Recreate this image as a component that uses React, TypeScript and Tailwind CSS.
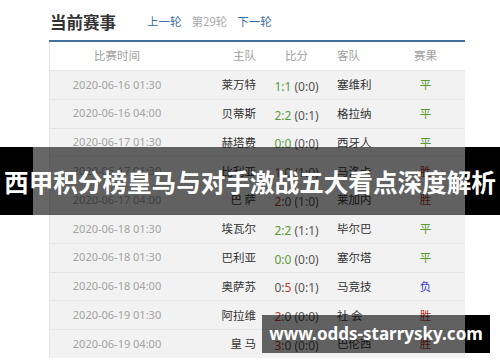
import React from "react";

type Row = {
  date: string;
  home: string;
  h: string;
  a: string;
  half: string;
  away: string;
  res: "平" | "胜" | "负";
};

const rows: Row[] = [
  { date: "2020-06-16 01:30", home: "莱万特", h: "1", a: "1", half: "(0:0)", away: "塞维利", res: "平" },
  { date: "2020-06-16 04:00", home: "贝蒂斯", h: "2", a: "2", half: "(0:1)", away: "格拉纳", res: "平" },
  { date: "2020-06-17 01:30", home: "赫塔费", h: "0", a: "0", half: "(0:0)", away: "西牙人", res: "平" },
  { date: "2020-06-17 01:30", home: "比利亚", h: "1", a: "0", half: "(1:0)", away: "马洛卡", res: "胜" },
  { date: "2020-06-17 04:00", home: "巴 萨", h: "2", a: "0", half: "(1:0)", away: "莱加内", res: "胜" },
  { date: "2020-06-18 01:30", home: "埃瓦尔", h: "2", a: "2", half: "(1:1)", away: "毕尔巴", res: "平" },
  { date: "2020-06-18 01:30", home: "巴利亚", h: "0", a: "0", half: "(0:0)", away: "塞尔塔", res: "平" },
  { date: "2020-06-18 04:00", home: "奥萨苏", h: "0", a: "5", half: "(0:1)", away: "马竞技", res: "负" },
  { date: "2020-06-19 01:30", home: "阿拉维", h: "2", a: "0", half: "(0:0)", away: "社 会", res: "胜" },
  { date: "2020-06-19 04:00", home: "皇 马", h: "3", a: "0", half: "(0:0)", away: "巴伦西", res: "胜" },
];

const cjk = { fontFamily: '"Noto Sans CJK SC", "Noto Sans", sans-serif' };
const latin = { fontFamily: '"Noto Sans", "Noto Sans CJK SC", sans-serif' };

function Score({ r }: { r: Row }) {
  const draw = r.h === r.a;
  const homeWin = Number(r.h) > Number(r.a);
  const hc = draw ? "text-[#5b9a3c]" : homeWin ? "text-[#c0392b]" : "text-[#555]";
  const ac = draw ? "text-[#5b9a3c]" : !homeWin ? "text-[#c0392b]" : "text-[#555]";
  const cc = draw ? "text-[#5b9a3c]" : "text-[#555]";
  return (
    <span className="text-[12px] whitespace-pre" style={latin}>
      <span className={hc}>{r.h}</span>
      <span className={cc}>:</span>
      <span className={ac}>{r.a}</span>
      <span className="text-[#555]"> {r.half}</span>
    </span>
  );
}

function resColor(res: string) {
  if (res === "平") return "text-[#5b9a3c]";
  if (res === "胜") return "text-[#a8322b]";
  return "text-[#3b3bc4]";
}

export default function App() {
  return (
    <div className="relative w-[500px] h-[362px] bg-white overflow-hidden">
      <div className="ml-[49px] w-[416px]">
        <div className="h-[40px] flex items-center pt-[4px]">
          <span className="text-[16.5px] font-bold text-[#333] mr-[31px] ml-[1px]" style={cjk}>
            当前赛事
          </span>
          <span className="text-[11.5px] text-[#3a6ea8] mr-[10px]" style={cjk}>上一轮</span>
          <span className="text-[11.5px] text-[#aaa] mr-[10px]" style={cjk}>第29轮</span>
          <span className="text-[11.5px] text-[#3a6ea8]" style={cjk}>下一轮</span>
        </div>
        <div className="h-[2px] bg-[#43719f]" />
        <div className="border-l border-[#e3e3e3]">
          <div className="grid grid-cols-[134px_82px_61px_58px_81px] h-[28px] items-center text-[11.5px] text-[#a0a0a0] bg-white" style={cjk}>
            <div className="text-center">比赛时间</div>
            <div className="text-right pr-[10px]">主队</div>
            <div className="text-center">比分</div>
            <div className="pl-[10px]">客队</div>
            <div className="text-center">赛果</div>
          </div>
          {rows.map((r, i) => (
            <div
              key={i}
              className="grid grid-cols-[134px_82px_61px_58px_81px] h-[28.8px] items-center bg-[#f2f2f2] border-t border-[#e6e6e6]"
            >
              <div className="text-center text-[11px] text-[#a3a3a3]" style={latin}>{r.date}</div>
              <div className="text-right pr-[10px] text-[11.5px] text-[#333] whitespace-pre" style={cjk}>{r.home}</div>
              <div className="text-center"><Score r={r} /></div>
              <div className="pl-[10px] text-[11.5px] text-[#333] whitespace-pre" style={cjk}>{r.away}</div>
              <div className={`text-center text-[11.5px] ${resColor(r.res)}`} style={cjk}>{r.res}</div>
            </div>
          ))}
        </div>
      </div>

      {/* Title banner overlay */}
      <div className="absolute left-0 top-[147px] w-[500px] h-[68px] flex">
        <div className="w-[33px] h-full bg-black" />
        <div className="w-[432px] h-full bg-black/60" />
        <div className="flex-1 h-full bg-black" />
        <div className="absolute inset-0 flex items-center justify-center">
          <span className="text-white font-bold text-[24.6px] whitespace-nowrap tracking-[0px]" style={cjk}>
            西甲积分榜皇马与对手激战五大看点深度解析
          </span>
        </div>
      </div>

      {/* Watermark */}
      <div className="absolute left-[262px] top-[315px] w-[228px] h-[38px] flex">
        <div className="w-[203px] h-full bg-black/60" />
        <div className="flex-1 h-full bg-black" />
        <div className="absolute inset-0 flex items-center justify-center">
          <span className="text-white font-bold text-[17px] whitespace-nowrap" style={latin}>
            www.odds-starrysky.com
          </span>
        </div>
      </div>
    </div>
  );
}
